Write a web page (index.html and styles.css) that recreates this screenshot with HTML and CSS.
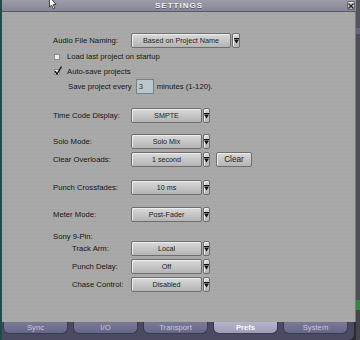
FILE: index.html
```html
<!DOCTYPE html>
<html lang="en">
<head>
    <meta charset="UTF-8">
    <meta name="viewport" content="width=device-width, initial-scale=1.0">
    <title>Settings</title>
    <link rel="stylesheet" href="styles.css">
</head>
<body>
    <div class="screen">
        <div class="edge-left"></div>

        <div class="window">
            <div class="titlebar">
                <span></span>
                <span class="title">SETTINGS</span>
                <span class="close">
                    <svg width="6" height="6" viewBox="0 0 6 6"><path d="M0.5 0.5L5.5 5.5M5.5 0.5L0.5 5.5" stroke="#222" stroke-width="1.3"/></svg>
                </span>
            </div>

            <div class="panel">
                <div class="row">
                    <span class="label">Audio File Naming:</span>
                    <div class="select">
                        <span class="select-box wide">Based on Project Name</span>
                        <span class="select-btn wide"><svg width="5" height="6" viewBox="0 0 5 6"><path d="M0 0h5v1H0zM0 1.5h5L2.5 5.5z" fill="#111"/></svg></span>
                    </div>
                </div>

                <div class="row check-row first">
                    <span class="checkbox"></span>
                    <span>Load last project on startup</span>
                </div>
                <div class="row check-row">
                    <span class="checkbox">
                        <svg class="tick" width="8" height="9" viewBox="0 0 8 9"><path d="M1 5.2L3 8L7.5 0.5" fill="none" stroke="#111" stroke-width="1.4"/></svg>
                    </span>
                    <span>Auto-save projects</span>
                </div>
                <div class="row save-row">
                    <span>Save project every</span>
                    <span class="num-input">3</span>
                    <span>minutes (1-120).</span>
                </div>

                <div class="row timecode">
                    <span class="label">Time Code Display:</span>
                    <div class="select">
                        <span class="select-box">SMPTE</span>
                        <span class="select-btn"><svg width="5" height="6" viewBox="0 0 5 6"><path d="M0 0h5v1H0zM0 1.5h5L2.5 5.5z" fill="#111"/></svg></span>
                    </div>
                </div>

                <div class="row solo">
                    <span class="label">Solo Mode:</span>
                    <div class="select">
                        <span class="select-box">Solo Mix</span>
                        <span class="select-btn"><svg width="5" height="6" viewBox="0 0 5 6"><path d="M0 0h5v1H0zM0 1.5h5L2.5 5.5z" fill="#111"/></svg></span>
                    </div>
                </div>
                <div class="row pair">
                    <span class="label">Clear Overloads:</span>
                    <div class="select">
                        <span class="select-box">1 second</span>
                        <span class="select-btn"><svg width="5" height="6" viewBox="0 0 5 6"><path d="M0 0h5v1H0zM0 1.5h5L2.5 5.5z" fill="#111"/></svg></span>
                    </div>
                    <button type="button" class="clear-btn">Clear</button>
                </div>

                <div class="row crossfades">
                    <span class="label">Punch Crossfades:</span>
                    <div class="select">
                        <span class="select-box">10 ms</span>
                        <span class="select-btn"><svg width="5" height="6" viewBox="0 0 5 6"><path d="M0 0h5v1H0zM0 1.5h5L2.5 5.5z" fill="#111"/></svg></span>
                    </div>
                </div>

                <div class="row group">
                    <span class="label">Meter Mode:</span>
                    <div class="select">
                        <span class="select-box">Post-Fader</span>
                        <span class="select-btn"><svg width="5" height="6" viewBox="0 0 5 6"><path d="M0 0h5v1H0zM0 1.5h5L2.5 5.5z" fill="#111"/></svg></span>
                    </div>
                </div>

                <div class="row heading">Sony 9-Pin:</div>
                <div class="row">
                    <span class="label sub">Track Arm:</span>
                    <div class="select">
                        <span class="select-box">Local</span>
                        <span class="select-btn"><svg width="5" height="6" viewBox="0 0 5 6"><path d="M0 0h5v1H0zM0 1.5h5L2.5 5.5z" fill="#111"/></svg></span>
                    </div>
                </div>
                <div class="row pair">
                    <span class="label sub">Punch Delay:</span>
                    <div class="select">
                        <span class="select-box">Off</span>
                        <span class="select-btn"><svg width="5" height="6" viewBox="0 0 5 6"><path d="M0 0h5v1H0zM0 1.5h5L2.5 5.5z" fill="#111"/></svg></span>
                    </div>
                </div>
                <div class="row pair">
                    <span class="label sub">Chase Control:</span>
                    <div class="select">
                        <span class="select-box">Disabled</span>
                        <span class="select-btn"><svg width="5" height="6" viewBox="0 0 5 6"><path d="M0 0h5v1H0zM0 1.5h5L2.5 5.5z" fill="#111"/></svg></span>
                    </div>
                </div>
            </div>

            <div class="tabs">
                <span class="tab">Sync</span>
                <span class="tab">I/O</span>
                <span class="tab">Transport</span>
                <span class="tab active">Prefs</span>
                <span class="tab">System</span>
            </div>
        </div>

        <div class="edge-right"></div>

        <!-- mouse pointer sitting over the title bar -->
        <svg class="cursor" width="9" height="11" viewBox="0 0 9 11"><path d="M0.5 -3L0.5 7L2.6 5.2L4.3 8.8L5.8 8.1L4.2 4.6L7 4.4Z" fill="#fff" stroke="#222" stroke-width="0.8"/></svg>
    </div>
</body>
</html>
```

FILE: styles.css
```css
body {
    margin: 0;
    font-family: "Liberation Sans", Arial, sans-serif;
    background: #2a2a30;
}
.screen {
    position: relative;
    display: flex;
    width: 360px;
    height: 340px;
    overflow: hidden;
}
.edge-left {
    width: 2px;
    background: #1f4c4a;
}
.edge-right {
    width: 4px;
    background: linear-gradient(#55555f 0, #55555f 28px, #6a6288 28px, #6a6288 34px, #4e4e56 34px, #4e4e56 300px, #2f8a3e 300px, #2f8a3e 310px, #45454d 310px);
}
.window {
    width: 354px;
    display: flex;
    flex-direction: column;
}
.titlebar {
    height: 11px;
    display: grid;
    grid-template-columns: 1fr auto 1fr;
    align-items: center;
    background: linear-gradient(#9c9caa, #868698);
    border-bottom: 1px solid #56566a;
}
.title {
    font-size: 8px;
    font-weight: bold;
    letter-spacing: 1px;
    color: #f2f2f2;
    text-shadow: 0 1px 0 #5a5a66;
    line-height: 11px;
}
.close {
    justify-self: end;
    margin-right: 1px;
    width: 8px;
    height: 9px;
    border: 1px solid #6a6a6a;
    border-radius: 1px;
    background: linear-gradient(#e2e2e2, #b6b6b6);
    display: flex;
    align-items: center;
    justify-content: center;
    box-sizing: border-box;
}
.panel {
    flex: 1;
    padding: 21px 0 0 49px;
    border-right: 1px solid #7a7a7a;
    background: repeating-linear-gradient(#aaaaaa 0, #aaaaaa 1px, #a5a5a5 1px, #a5a5a5 2px, #a8a8a8 2px, #a8a8a8 4px);
    color: #151515;
    font-size: 7.7px;
}
.row {
    display: flex;
    align-items: center;
    height: 15px;
}
.row.first {
    margin-top: 1px;
}
.row.timecode {
    margin-top: 14px;
}
.row.solo {
    margin-top: 11px;
}
.row.crossfades {
    margin-top: 13px;
}
.row.group {
    margin-top: 12px;
}
.row.pair {
    margin-top: 3px;
}
.label {
    width: 80px;
    padding-left: 2px;
    box-sizing: border-box;
}
.label.sub {
    padding-left: 21px;
}
.heading {
    height: 9px;
    margin-top: 10px;
    padding-left: 2px;
}
.select {
    display: flex;
    height: 15px;
}
.select-box,
.select-btn,
.clear-btn {
    box-sizing: border-box;
    height: 15px;
    border: 1px solid #6e6e6e;
    border-radius: 2px;
    background: linear-gradient(#dadada, #c6c6c6 50%, #b4b4b4);
    box-shadow: inset 1px 1px 0 #eeeeee;
}
.select-box {
    width: 71px;
    display: flex;
    align-items: center;
    justify-content: center;
    font-size: 7.2px;
    color: #222;
}
.select-box.wide {
    width: 100px;
}
.select-btn {
    width: 7px;
    margin-left: 1px;
    display: flex;
    align-items: center;
    justify-content: center;
}
.select-btn.wide {
    width: 8px;
}
.clear-btn {
    margin-left: 6px;
    width: 36px;
    padding: 0;
    font-family: inherit;
    font-size: 8.2px;
    color: #1c1c1c;
}
.check-row {
    padding-left: 3px;
}
.checkbox {
    position: relative;
    width: 6px;
    height: 6px;
    margin-right: 7px;
    background: #ececec;
    border: 1px solid #8a8a8a;
    box-sizing: border-box;
}
.tick {
    position: absolute;
    left: -1px;
    top: -4px;
}
.save-row {
    padding-left: 17px;
}
.num-input {
    box-sizing: border-box;
    width: 18px;
    height: 15px;
    margin: 0 3px 0 4px;
    padding-left: 2px;
    border: 1px solid #7a8088;
    background: #b9c6ce;
    line-height: 13px;
    color: #333;
}
.tabs {
    height: 18px;
    display: flex;
    gap: 5px;
    padding-left: 1px;
    background: #4a4a62;
    border-bottom-right-radius: 6px;
    margin-right: 2px;
}
.tab {
    width: 65px;
    height: 12px;
    box-sizing: border-box;
    border: 1px solid #3a3a50;
    border-top: none;
    border-radius: 0 0 6px 6px;
    background: linear-gradient(#7a7a98, #66668a);
    color: #c9c9d9;
    font-size: 7.7px;
    text-align: center;
    line-height: 11px;
}
.tab.active {
    background: linear-gradient(#b4b4cc, #9c9cb8);
    color: #fafafa;
    font-weight: bold;
}
.cursor {
    position: absolute;
    left: 49px;
    top: 0;
}
```
